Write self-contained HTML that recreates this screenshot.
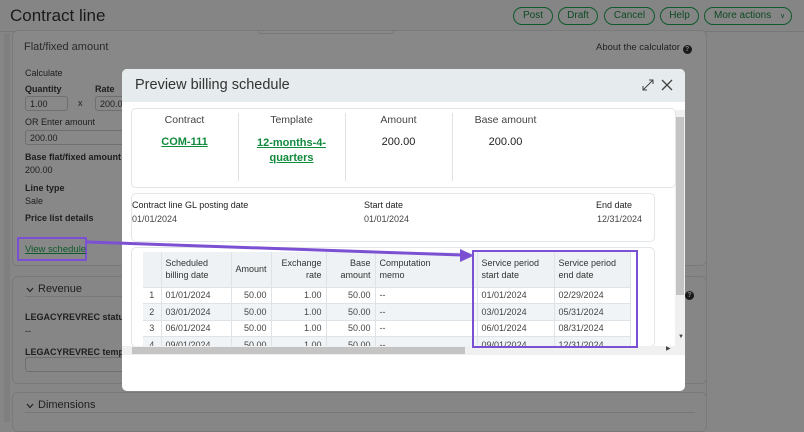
<!DOCTYPE html>
<html style="background:#868686"><head><meta charset="utf-8"><style>
*{box-sizing:border-box;margin:0;padding:0}
html,body{background:#868686}
body{width:804px;height:422px;overflow:hidden;position:relative;font-family:"Liberation Sans",Arial,sans-serif;color:#222}
.a{position:absolute;white-space:nowrap}
.btn{position:absolute;top:7px;height:18px;border:1.5px solid #0d5a2a;border-radius:10px;font-size:10px;color:#0d4a22;text-align:center;line-height:15px}
.t{font-size:9px;color:#1e1e1e}
.lnk{color:#128a3e;text-decoration:underline;font-weight:bold;font-size:11px}
td,th{font-size:9px;color:#444;font-weight:normal;border-right:1px solid #dde3e6;border-bottom:1px solid #dde3e6;padding:0 4px;height:16.5px}
th{background:#eef2f4;color:#333;line-height:12px;height:35px;vertical-align:middle}
table{border-collapse:collapse;position:absolute;table-layout:fixed}
tr.o td{background:#f1f4f6}
.q{display:inline-block;width:9px;height:9px;border-radius:50%;background:#1a1a1a;color:#888;font-size:7px;line-height:9px;text-align:center;font-weight:bold;vertical-align:-1px}
</style></head><body>
<div class="a" style="left:0;top:0;width:804px;height:422px;background:#868686"></div>
<div class="a" style="left:0;top:0;width:804px;height:32px;background:#858585;border-bottom:1px solid #777"></div>
<div class="a" style="left:10px;top:6px;font-size:17px;color:#1a1a1a">Contract line</div>
<div class="btn" style="left:513px;width:40px">Post</div>
<div class="btn" style="left:558px;width:40px">Draft</div>
<div class="btn" style="left:604px;width:51px">Cancel</div>
<div class="btn" style="left:660px;width:39px">Help</div>
<div class="btn" style="left:704px;width:88px;text-align:left;padding-left:9px">More actions <span style="font-size:7px;margin-left:6px">∨</span></div>
<div class="a" style="left:706px;top:33px;width:1px;height:389px;background:#7a7a7a"></div>
<div class="a" style="left:4px;top:33px;width:6px;height:389px;background:#7f7f7f"></div>
<div class="a" style="left:12px;top:30px;width:695px;height:236px;border:1px solid #7a7a7a;border-radius:6px;background:#888"></div>
<div class="a" style="left:258px;top:30px;width:136px;height:4px;border:1px solid #777;border-top:0;border-radius:0 0 3px 3px"></div>
<div class="a" style="left:24px;top:41px;font-size:11px;color:#2a2a2a">Flat/fixed amount</div>
<div class="a" style="left:596px;top:42px;font-size:9.5px;color:#222">About the calculator <span class="q">?</span></div>
<div class="a t" style="left:25px;top:68px">Calculate</div>
<div class="a t" style="left:25px;top:84px;font-weight:bold">Quantity</div>
<div class="a t" style="left:95px;top:84px;font-weight:bold">Rate</div>
<div class="a t" style="left:25px;top:96px;width:43px;height:15px;border:1px solid #6f6f6f;border-radius:3px;padding:2px 4px">1.00</div>
<div class="a t" style="left:78px;top:98px">x</div>
<div class="a t" style="left:95px;top:96px;width:40px;height:15px;border:1px solid #6f6f6f;border-radius:3px;padding:2px 4px">200.00</div>
<div class="a t" style="left:25px;top:117px">OR Enter amount</div>
<div class="a t" style="left:25px;top:130px;width:110px;height:15px;border:1px solid #6f6f6f;border-radius:3px;padding:2px 4px">200.00</div>
<div class="a t" style="left:25px;top:152px;font-weight:bold">Base flat/fixed amount</div>
<div class="a t" style="left:25px;top:165px">200.00</div>
<div class="a t" style="left:25px;top:183px;font-weight:bold">Line type</div>
<div class="a t" style="left:25px;top:196px">Sale</div>
<div class="a t" style="left:25px;top:213px;font-weight:bold">Price list details</div>
<div class="a" style="left:17px;top:237px;width:70px;height:24px;border:2.5px solid #7c50d2"></div>
<div class="a" style="left:25px;top:244px;font-size:9.5px;color:#0d5a2a;text-decoration:underline">View schedule</div>
<div class="a" style="left:12px;top:276px;width:695px;height:108px;border:1px solid #7a7a7a;border-radius:6px"></div>
<svg class="a" style="left:26px;top:287px" width="8" height="6"><path d="M1 1 L4 4.5 L7 1" stroke="#222" fill="none" stroke-width="1.2"/></svg>
<div class="a" style="left:38px;top:283px;font-size:11px;color:#1e1e1e">Revenue</div>
<div class="a" style="left:25px;top:296px;width:670px;height:1px;background:#777"></div>
<div class="a t" style="left:25px;top:312px;font-weight:bold">LEGACYREVREC status</div>
<div class="a t" style="left:25px;top:326px">--</div>
<div class="a t" style="left:25px;top:347px;font-weight:bold">LEGACYREVREC template</div>
<div class="a" style="left:25px;top:357px;width:110px;height:15px;border:1px solid #6f6f6f;border-radius:3px"></div>
<div class="a" style="left:685px;top:283px"><span class="q">?</span></div>
<div class="a" style="left:12px;top:392px;width:695px;height:40px;border:1px solid #7a7a7a;border-radius:6px"></div>
<svg class="a" style="left:26px;top:403px" width="8" height="6"><path d="M1 1 L4 4.5 L7 1" stroke="#222" fill="none" stroke-width="1.2"/></svg>
<div class="a" style="left:38px;top:399px;font-size:11px;color:#1e1e1e">Dimensions</div>
<div class="a" style="left:25px;top:412px;width:670px;height:1px;background:#777"></div>

<!-- modal -->
<div class="a" style="left:122px;top:69px;width:563px;height:322px;background:#fff;border-radius:5px;overflow:hidden">
 <div class="a" style="left:0;top:0;width:563px;height:33px;background:#e6ebed"></div>
 <div class="a" style="left:13px;top:8px;font-size:14.5px;color:#333">Preview billing schedule</div>
 <svg class="a" style="left:519px;top:9px" width="14" height="14"><path d="M2 12 L12 2 M8 2 H12 V6 M2 8 V12 H6" stroke="#444" fill="none" stroke-width="1"/></svg>
 <svg class="a" style="left:539px;top:10px" width="12" height="12"><path d="M1 1 L11 11 M11 1 L1 11" stroke="#444" stroke-width="1.3"/></svg>
 <div class="a" style="left:553px;top:41px;width:10px;height:236px;background:#f0f0f0"></div>
 <div class="a" style="left:554px;top:48px;width:8px;height:178px;background:#c4c4c4"></div>
</div>
<div class="a" style="left:131px;top:108px;width:545px;height:80px;border:1px solid #e2e6e8;border-radius:5px"></div>
<div class="a" style="left:238px;top:113px;width:1px;height:68px;background:#dde2e4"></div>
<div class="a" style="left:345px;top:113px;width:1px;height:68px;background:#dde2e4"></div>
<div class="a" style="left:452px;top:113px;width:1px;height:68px;background:#dde2e4"></div>
<div class="a" style="left:131px;top:114px;width:107px;text-align:center;font-size:10.5px;color:#444">Contract</div>
<div class="a" style="left:238px;top:114px;width:107px;text-align:center;font-size:10.5px;color:#444">Template</div>
<div class="a" style="left:345px;top:114px;width:107px;text-align:center;font-size:10.5px;color:#444">Amount</div>
<div class="a" style="left:452px;top:114px;width:107px;text-align:center;font-size:10.5px;color:#444">Base amount</div>
<div class="a lnk" style="left:131px;top:136px;width:107px;text-align:center">COM-111</div>
<div class="a lnk" style="left:238px;top:136px;width:107px;text-align:center;white-space:normal;line-height:15px">12-months-4-<br>quarters</div>
<div class="a" style="left:345px;top:136px;width:107px;text-align:center;font-size:11px;color:#222">200.00</div>
<div class="a" style="left:452px;top:136px;width:107px;text-align:center;font-size:11px;color:#222">200.00</div>
<div class="a" style="left:131px;top:193px;width:524px;height:49px;border:1px solid #e2e6e8;border-radius:5px"></div>
<div class="a t" style="left:132px;top:200px">Contract line GL posting date</div>
<div class="a t" style="left:132px;top:214px;color:#444">01/01/2024</div>
<div class="a t" style="left:364px;top:200px">Start date</div>
<div class="a t" style="left:364px;top:214px;color:#444">01/01/2024</div>
<div class="a t" style="left:596px;top:200px">End date</div>
<div class="a t" style="left:597px;top:214px;color:#444">12/31/2024</div>
<div class="a" style="left:131px;top:247px;width:524px;height:100px;border:1px solid #e2e6e8;border-radius:5px"></div>
<div class="a" style="left:132px;top:252px;width:522px;height:94px;overflow:hidden">
<table style="left:11px;top:0">
<colgroup><col style="width:18px"><col style="width:70px"><col style="width:39px"><col style="width:55px"><col style="width:49px"><col style="width:102px"><col style="width:77px"><col style="width:76px"></colgroup>
<tr><th></th><th style="text-align:left">Scheduled<br>billing date</th><th style="text-align:right">Amount</th><th style="text-align:right">Exchange<br>rate</th><th style="text-align:right">Base<br>amount</th><th style="text-align:left">Computation<br>memo</th><th style="text-align:left">Service period<br>start date</th><th style="text-align:left">Service period<br>end date</th></tr>
<tr><td style="text-align:center">1</td><td>01/01/2024</td><td style="text-align:right">50.00</td><td style="text-align:right">1.00</td><td style="text-align:right">50.00</td><td>--</td><td>01/01/2024</td><td>02/29/2024</td></tr>
<tr class="o"><td style="text-align:center">2</td><td>03/01/2024</td><td style="text-align:right">50.00</td><td style="text-align:right">1.00</td><td style="text-align:right">50.00</td><td>--</td><td>03/01/2024</td><td>05/31/2024</td></tr>
<tr><td style="text-align:center">3</td><td>06/01/2024</td><td style="text-align:right">50.00</td><td style="text-align:right">1.00</td><td style="text-align:right">50.00</td><td>--</td><td>06/01/2024</td><td>08/31/2024</td></tr>
<tr class="o"><td style="text-align:center">4</td><td>09/01/2024</td><td style="text-align:right">50.00</td><td style="text-align:right">1.00</td><td style="text-align:right">50.00</td><td>--</td><td>09/01/2024</td><td>12/31/2024</td></tr>
</table>
</div>
<div class="a" style="left:122px;top:346px;width:563px;height:9px;background:#f0f0f0"></div>
<div class="a" style="left:132px;top:347px;width:333px;height:7px;background:#c4c4c4"></div>
<div class="a" style="left:666px;top:345px;font-size:6px;color:#444">▶</div>
<div class="a" style="left:678px;top:334px;font-size:6px;color:#444">▼</div>
<div class="a" style="left:472px;top:250px;width:166px;height:98px;border:2.5px solid #7c50d2"></div>
<svg class="a" style="left:0;top:0" width="804" height="422"><line x1="87" y1="242" x2="462" y2="255" stroke="#7c50d2" stroke-width="3"/><polygon points="460,249 474,255.5 460,262" fill="#7c50d2"/></svg>
</body></html>
